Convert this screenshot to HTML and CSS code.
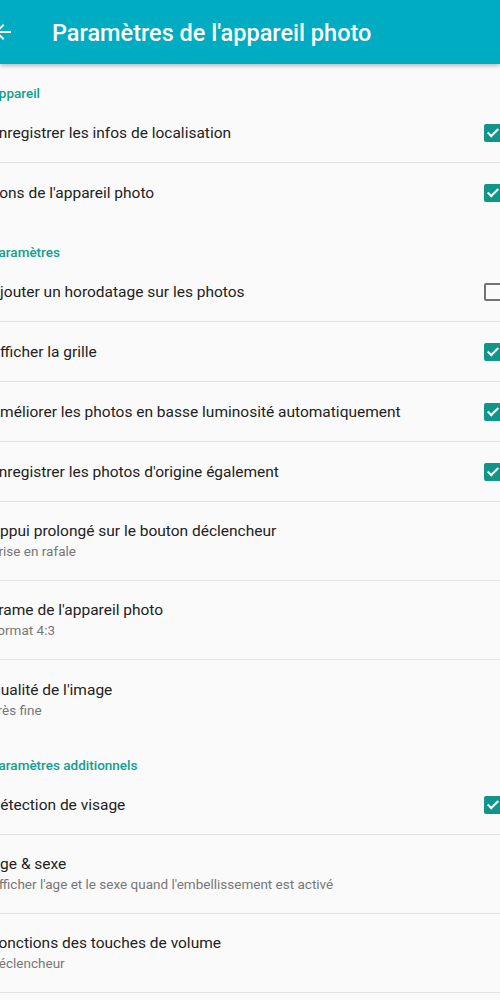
FILE: index.html
```html
<!DOCTYPE html>
<html lang="fr">
<head>
<meta charset="utf-8">
<title>Paramètres de l'appareil photo</title>
<link rel="stylesheet" href="styles.css">
</head>
<body>
<header class="appbar">
  <svg class="back" viewBox="0 0 24 24" width="24" height="24"><path d="M20 11H7.83l5.59-5.59L12 4l-8 8 8 8 1.41-1.41L7.83 13H20v-2z" fill="#fff"/></svg>
  <h1 class="title">Paramètres de l'appareil photo</h1>
</header>
<main class="list">
  <div class="cat">Appareil</div>
  <div class="row"><span class="label">Enregistrer les infos de localisation</span><span class="cb on"></span></div>
  <div class="row last"><span class="label">Sons de l'appareil photo</span><span class="cb on"></span></div>

  <div class="cat">Paramètres</div>
  <div class="row"><span class="label">Ajouter un horodatage sur les photos</span><span class="cb"></span></div>
  <div class="row"><span class="label">Afficher la grille</span><span class="cb on"></span></div>
  <div class="row"><span class="label">Améliorer les photos en basse luminosité automatiquement</span><span class="cb on"></span></div>
  <div class="row"><span class="label">Enregistrer les photos d'origine également</span><span class="cb on"></span></div>
  <div class="row two"><div class="texts"><span class="label">Appui prolongé sur le bouton déclencheur</span><span class="sub">Prise en rafale</span></div></div>
  <div class="row two"><div class="texts"><span class="label">Frame de l'appareil photo</span><span class="sub">Format 4:3</span></div></div>
  <div class="row two last"><div class="texts"><span class="label">Qualité de l'image</span><span class="sub">Très fine</span></div></div>

  <div class="cat short">Paramètres additionnels</div>
  <div class="row"><span class="label">Détection de visage</span><span class="cb on"></span></div>
  <div class="row two"><div class="texts"><span class="label">Age &amp; sexe</span><span class="sub">Afficher l'age et le sexe quand l'embellissement est activé</span></div></div>
  <div class="row two"><div class="texts"><span class="label">Fonctions des touches de volume</span><span class="sub">Déclencheur</span></div></div>
  <div class="row two"><div class="texts"><span class="label">Réinitialiser les paramètres</span><span class="sub">Restaurer les valeurs par défaut</span></div></div>
</main>
</body>
</html>
```

FILE: styles.css
```css
html, body {
  margin: 0;
  padding: 0;
  background: #fafafa;
  overflow: hidden;
  width: 500px;
  height: 1000px;
  font-family: Roboto, "Noto Sans", sans-serif;
}

.appbar {
  position: relative;
  z-index: 2;
  height: 64px;
  background: #00acc1;
  display: flex;
  align-items: center;
  box-shadow: 0 2px 4px rgba(0,0,0,0.25);
}

.back {
  flex: none;
  margin-left: -9px;
}

.title {
  margin: 0 0 0 37px;
  color: #fff;
  font-size: 23.5px;
  font-weight: 500;
  line-height: 28px;
  padding-top: 2px;
}

.list {
  width: 520px;
  margin-left: -10px;
}

.cat {
  height: 39px;
  box-sizing: border-box;
  padding-top: 19px;
  font-size: 13.5px;
  line-height: 20px;
  font-weight: 500;
  color: #119e8f;
}

.cat.short {
  height: 36px;
  padding-top: 16px;
}

.row {
  display: flex;
  align-items: center;
  height: 60px;
  box-sizing: border-box;
  border-bottom: 1px solid #e2e2e2;
  padding-right: 8px;
}

.row.two {
  height: 79px;
}

.row.last {
  border-bottom: none;
}

.texts {
  display: flex;
  flex-direction: column;
}

.label {
  flex: 1;
  font-size: 15.5px;
  line-height: 20px;
  color: #222;
}

.sub {
  font-size: 13.5px;
  line-height: 20px;
  color: #777;
}

.cb {
  flex: none;
  width: 18px;
  height: 18px;
  box-sizing: border-box;
  border: 2px solid #737373;
  border-radius: 2px;
  position: relative;
}

.cb.on {
  background: #0f9688;
  border-color: #0f9688;
}

.cb.on::after {
  content: "";
  position: absolute;
  left: 4px;
  top: 0px;
  width: 4px;
  height: 9px;
  border-right: 2px solid #fff;
  border-bottom: 2px solid #fff;
  transform: rotate(45deg);
}
```
